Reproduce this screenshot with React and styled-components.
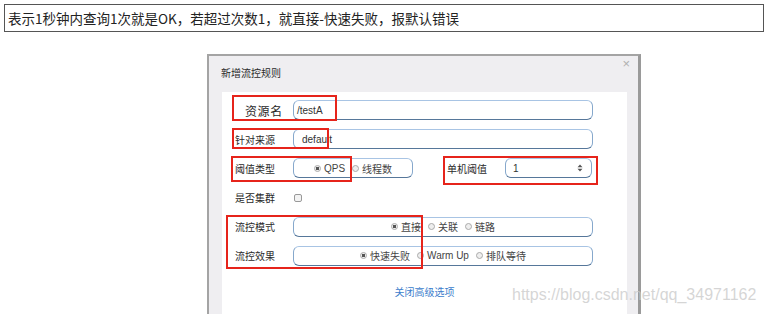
import React from 'react';
import styled, { createGlobalStyle } from 'styled-components';

const GlobalStyle = createGlobalStyle`
    html, body {
        margin: 0;
        padding: 0;
        background: #fff;
        overflow: hidden;
    }
    body {
        font-family: "Noto Sans CJK SC", "Liberation Sans", sans-serif;
        color: #333;
    }
`;

const Page = styled.div`
    position: relative;
    width: 765px;
    height: 314px;
    overflow: hidden;
`;

const Caption = styled.div`
    box-sizing: border-box;
    margin: 4px 0 0 4px;
    width: 760px;
    height: 28px;
    border: 1px solid #555;
    padding-left: 3px;
    font-size: 13.5px;
    line-height: 26px;
    color: #222;
    white-space: nowrap;
`;

const Dialog = styled.div`
    box-sizing: border-box;
    margin: 22px 0 0 207px;
    width: 434px;
    height: 300px;
    background: #efeef1;
    border: 2px solid #a4a4a4;
    border-right: 3px solid #9a9a9a;
    border-bottom: none;
    display: flex;
    flex-direction: column;
`;

const Header = styled.div`
    height: 36px;
    display: flex;
    justify-content: space-between;
    align-items: flex-start;
    padding: 0 8px 0 12px;
`;

const Title = styled.div`
    margin-top: 10px;
    font-size: 10px;
    line-height: 14px;
    color: #2a2a2a;
`;

const Close = styled.div`
    margin-top: 1px;
    font-size: 13px;
    line-height: 14px;
    color: #b0b0b0;
    font-family: "Liberation Sans", sans-serif;
`;

const Panel = styled.div`
    flex: 1;
    margin: 0 11px 0 13px;
    background: #fff;
    padding: 8px 34px 0 13px;
    display: flex;
    flex-direction: column;
    gap: 9.2px;
`;

const Row = styled.div`
    display: flex;
    align-items: center;
    height: 20px;
`;

const Label = styled.div`
    flex-shrink: 0;
    width: ${props => props.$wide ? "48px" : "58px"};
    padding-left: ${props => props.$wide ? "10px" : "0"};
    font-size: ${props => props.$wide ? "12px" : "10px"};
    letter-spacing: ${props => props.$wide ? "0.6px" : "0"};
    color: #2a2a2a;
    white-space: nowrap;
`;

const boxBorder = `
    box-sizing: border-box;
    height: 20px;
    border: 1px solid;
    border-color: #a8c4e4 #86a8cc #56779a #86a8cc;
    border-radius: 6px;
    background: #fff;
`;

const Input = styled.div`
    ${boxBorder}
    flex: ${props => props.$width ? "none" : "1"};
    width: ${props => props.$width ? props.$width + "px" : "auto"};
    display: flex;
    align-items: center;
    justify-content: space-between;
    padding: 0 8px 0 ${props => props.$pad || 5}px;
    font-family: "Liberation Sans", sans-serif;
    font-size: 10px;
    color: #333;
`;

const Group = styled.div`
    ${boxBorder}
    flex: ${props => props.$width ? "none" : "1"};
    width: ${props => props.$width ? props.$width + "px" : "auto"};
    display: flex;
    align-items: center;
    justify-content: center;
    gap: 7px;
`;

const Option = styled.span`
    display: flex;
    align-items: center;
    gap: 3px;
    font-size: 10px;
    color: #444;
    white-space: nowrap;
    font-family: ${props => props.$latin ? '"Liberation Sans", sans-serif' : 'inherit'};
`;

const Dot = styled.span`
    box-sizing: border-box;
    width: 7px;
    height: 7px;
    border-radius: 50%;
    border: 1px solid #aaa;
    background: ${props => props.$on ? "radial-gradient(circle, #555 0 1.6px, #eee 1.8px)" : "#eee"};
`;

const Check = styled.span`
    box-sizing: border-box;
    margin-left: 1px;
    width: 8px;
    height: 8px;
    border: 1px solid #999;
    border-radius: 2px;
    background: #f3f3f3;
`;

const Spacer = styled.div`
    width: 34px;
    flex-shrink: 0;
`;

const LinkRow = styled.div`
    margin: 9px -34px 0 -13px;
    text-align: center;
    font-size: 10px;
    color: #3c7dcc;
`;

const Mark = styled.div`
    position: absolute;
    box-sizing: border-box;
    left: ${props => props.$x}px;
    top: ${props => props.$y}px;
    width: ${props => props.$w}px;
    height: ${props => props.$h}px;
    border: 2px solid #e6241b;
    pointer-events: none;
`;

const Watermark = styled.div`
    position: absolute;
    left: 512px;
    top: 286px;
    font-family: "Liberation Sans", sans-serif;
    font-size: 16px;
    color: rgba(200, 200, 200, 0.75);
    white-space: nowrap;
    pointer-events: none;
`;

const Spinner = () =>
    <svg width="6" height="8" viewBox="0 0 6 8">
        <path d="M3 0.5 L5.5 3.2 H0.5 Z M3 7.5 L5.5 4.8 H0.5 Z" fill="#555"/>
    </svg>;

const Radio = ({on, latin, children}) =>
    <Option $latin={latin}><Dot $on={on}/>{children}</Option>;

const App = () => {
    return <Page>
        <GlobalStyle/>
        <Caption>表示1秒钟内查询1次就是OK，若超过次数1，就直接-快速失败，报默认错误</Caption>
        <Dialog>
            <Header>
                <Title>新增流控规则</Title>
                <Close>×</Close>
            </Header>
            <Panel>
                <Row>
                    <Label $wide>资源名</Label>
                    <Input $pad={3}>/testA</Input>
                </Row>
                <Row>
                    <Label>针对来源</Label>
                    <Input $pad={8}>default</Input>
                </Row>
                <Row>
                    <Label>阈值类型</Label>
                    <Group $width={120}>
                        <Radio on latin>QPS</Radio>
                        <Radio>线程数</Radio>
                    </Group>
                    <Spacer/>
                    <Label>单机阈值</Label>
                    <Input $width={87} $pad={7}>1<Spinner/></Input>
                </Row>
                <Row>
                    <Label>是否集群</Label>
                    <Check/>
                </Row>
                <Row>
                    <Label>流控模式</Label>
                    <Group>
                        <Radio on>直接</Radio>
                        <Radio>关联</Radio>
                        <Radio>链路</Radio>
                    </Group>
                </Row>
                <Row>
                    <Label>流控效果</Label>
                    <Group>
                        <Radio on>快速失败</Radio>
                        <Radio latin>Warm Up</Radio>
                        <Radio>排队等待</Radio>
                    </Group>
                </Row>
                <LinkRow>关闭高级选项</LinkRow>
            </Panel>
        </Dialog>
        <Mark $x={232} $y={95} $w={105} $h={26}/>
        <Mark $x={232} $y={128} $w={97} $h={21}/>
        <Mark $x={231} $y={156} $w={121} $h={26}/>
        <Mark $x={443} $y={156} $w={155} $h={29}/>
        <Mark $x={226} $y={215} $w={197} $h={54}/>
        <Watermark>https://blog.csdn.net/qq_34971162</Watermark>
    </Page>
};

export default App
